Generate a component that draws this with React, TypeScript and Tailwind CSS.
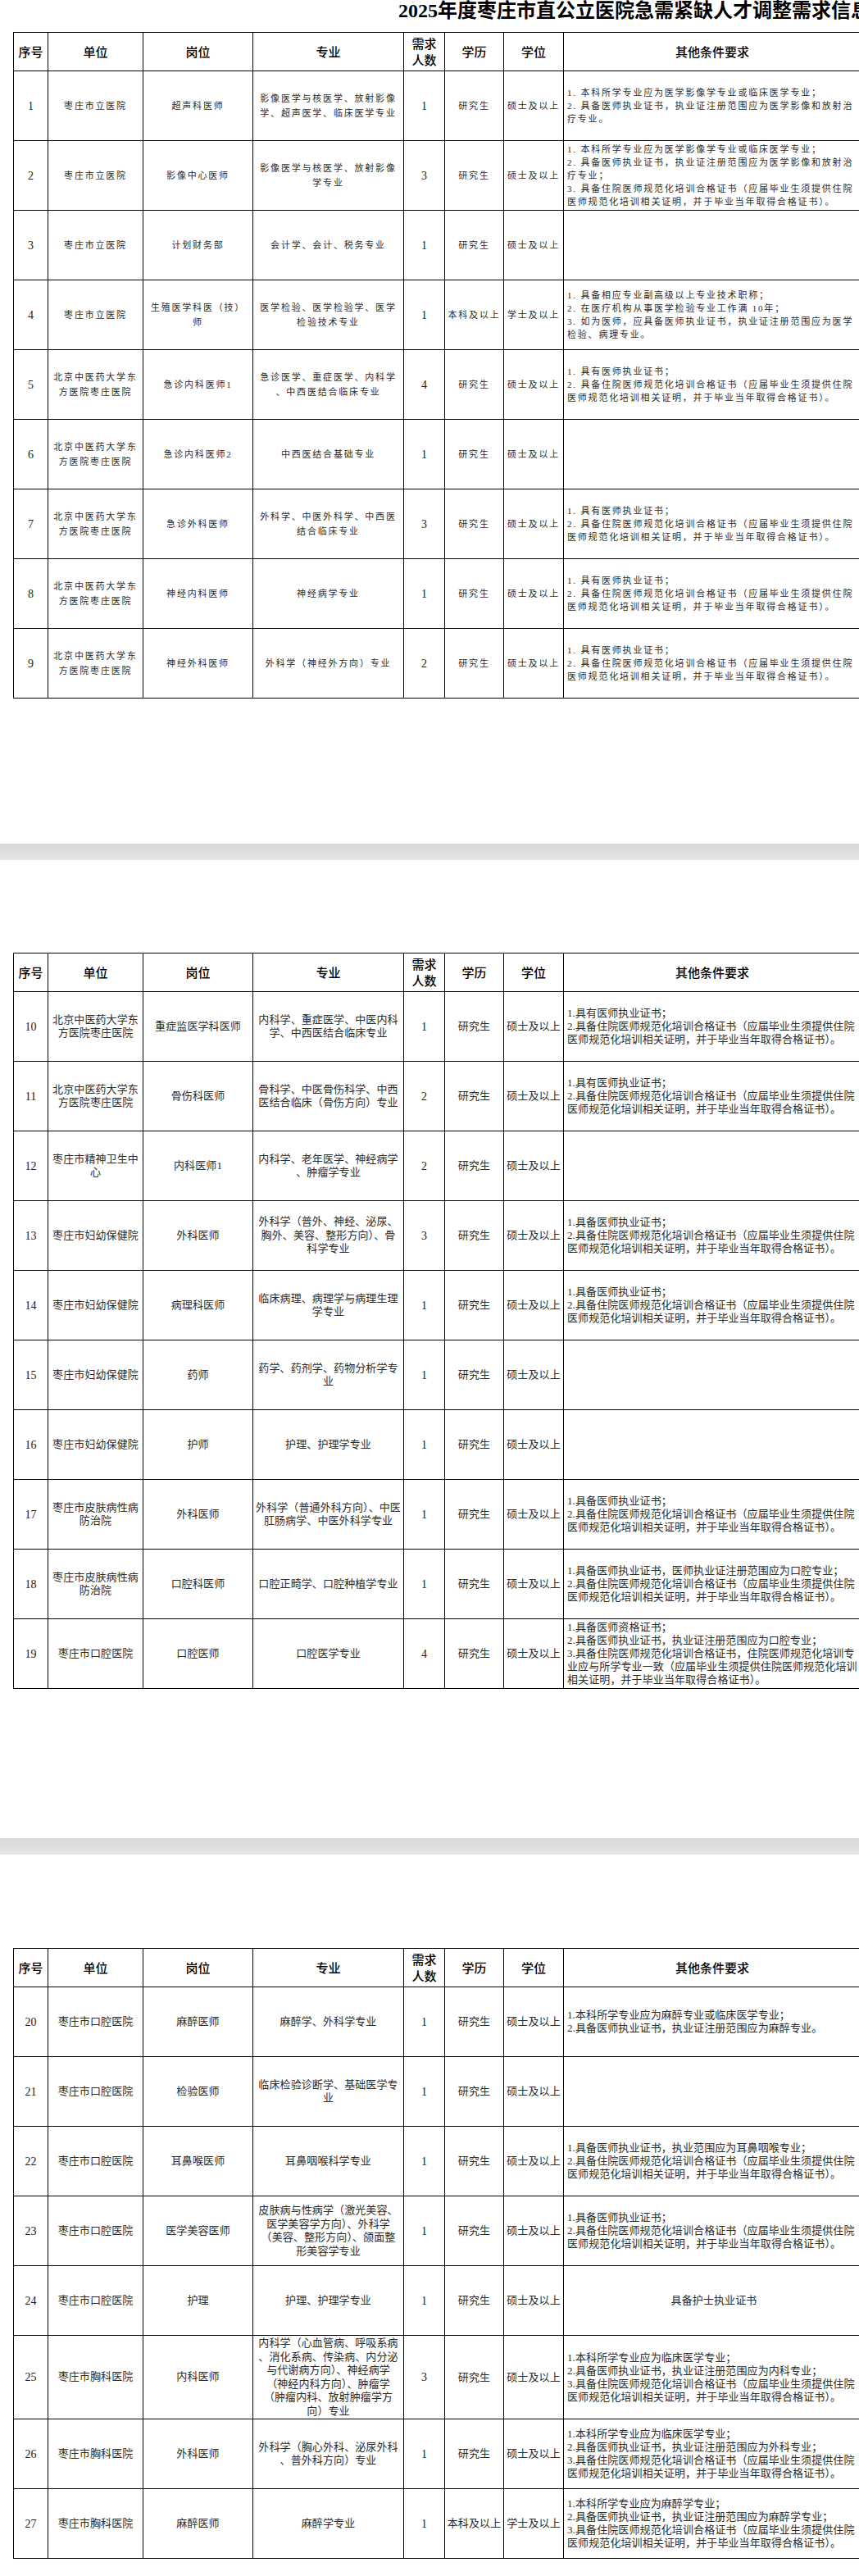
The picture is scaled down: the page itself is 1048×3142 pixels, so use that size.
import React from "react";

type Row = {
  no: string;
  unit: string[];
  post: string[];
  major: string[];
  num: string;
  edu: string;
  deg: string;
  req: string[];
  reqCenter?: boolean;
  tall?: boolean;
};

const BJ = ["北京中医药大学东", "方医院枣庄医院"];
const STD1 = [
  "2. 具备住院医师规范化培训合格证书（应届毕业生须提供住院",
  "医师规范化培训相关证明，并于毕业当年取得合格证书）。",
];
const STD2 = [
  "2.具备住院医师规范化培训合格证书（应届毕业生须提供住院",
  "医师规范化培训相关证明，并于毕业当年取得合格证书）。",
];
const STD3 = [
  "3.具备住院医师规范化培训合格证书（应届毕业生须提供住院",
  "医师规范化培训相关证明，并于毕业当年取得合格证书）。",
];

const G = "研究生";
const M = "硕士及以上";

const t1: Row[] = [
  {
    no: "1", unit: ["枣庄市立医院"], post: ["超声科医师"],
    major: ["影像医学与核医学、放射影像", "学、超声医学、临床医学专业"],
    num: "1", edu: G, deg: M,
    req: [
      "1. 本科所学专业应为医学影像学专业或临床医学专业；",
      "2. 具备医师执业证书，执业证注册范围应为医学影像和放射治",
      "疗专业。",
    ],
  },
  {
    no: "2", unit: ["枣庄市立医院"], post: ["影像中心医师"],
    major: ["影像医学与核医学、放射影像", "学专业"],
    num: "3", edu: G, deg: M,
    req: [
      "1. 本科所学专业应为医学影像学专业或临床医学专业；",
      "2. 具备医师执业证书，执业证注册范围应为医学影像和放射治",
      "疗专业；",
      "3. 具备住院医师规范化培训合格证书（应届毕业生须提供住院",
      "医师规范化培训相关证明，并于毕业当年取得合格证书）。",
    ],
  },
  {
    no: "3", unit: ["枣庄市立医院"], post: ["计划财务部"],
    major: ["会计学、会计、税务专业"], num: "1", edu: G, deg: M, req: [],
  },
  {
    no: "4", unit: ["枣庄市立医院"], post: ["生殖医学科医（技）", "师"],
    major: ["医学检验、医学检验学、医学", "检验技术专业"],
    num: "1", edu: "本科及以上", deg: "学士及以上",
    req: [
      "1. 具备相应专业副高级以上专业技术职称；",
      "2. 在医疗机构从事医学检验专业工作满 10年；",
      "3. 如为医师，应具备医师执业证书，执业证注册范围应为医学",
      "检验、病理专业。",
    ],
  },
  {
    no: "5", unit: BJ, post: ["急诊内科医师1"],
    major: ["急诊医学、重症医学、内科学", "、中西医结合临床专业"],
    num: "4", edu: G, deg: M, req: ["1. 具有医师执业证书；", ...STD1],
  },
  {
    no: "6", unit: BJ, post: ["急诊内科医师2"],
    major: ["中西医结合基础专业"], num: "1", edu: G, deg: M, req: [],
  },
  {
    no: "7", unit: BJ, post: ["急诊外科医师"],
    major: ["外科学、中医外科学、中西医", "结合临床专业"],
    num: "3", edu: G, deg: M, req: ["1. 具有医师执业证书；", ...STD1],
  },
  {
    no: "8", unit: BJ, post: ["神经内科医师"], major: ["神经病学专业"],
    num: "1", edu: G, deg: M, req: ["1. 具有医师执业证书；", ...STD1],
  },
  {
    no: "9", unit: BJ, post: ["神经外科医师"], major: ["外科学（神经外方向）专业"],
    num: "2", edu: G, deg: M, req: ["1. 具有医师执业证书；", ...STD1],
  },
];

const FY = ["枣庄市妇幼保健院"];
const PF = ["枣庄市皮肤病性病", "防治院"];
const KQ = ["枣庄市口腔医院"];
const XK = ["枣庄市胸科医院"];

const t2: Row[] = [
  {
    no: "10", unit: BJ, post: ["重症监医学科医师"],
    major: ["内科学、重症医学、中医内科", "学、中西医结合临床专业"],
    num: "1", edu: G, deg: M, req: ["1.具有医师执业证书；", ...STD2],
  },
  {
    no: "11", unit: BJ, post: ["骨伤科医师"],
    major: ["骨科学、中医骨伤科学、中西", "医结合临床（骨伤方向）专业"],
    num: "2", edu: G, deg: M, req: ["1.具有医师执业证书；", ...STD2],
  },
  {
    no: "12", unit: ["枣庄市精神卫生中", "心"], post: ["内科医师1"],
    major: ["内科学、老年医学、神经病学", "、肿瘤学专业"],
    num: "2", edu: G, deg: M, req: [],
  },
  {
    no: "13", unit: FY, post: ["外科医师"],
    major: ["外科学（普外、神经、泌尿、", "胸外、美容、整形方向）、骨", "科学专业"],
    num: "3", edu: G, deg: M, req: ["1.具备医师执业证书；", ...STD2],
  },
  {
    no: "14", unit: FY, post: ["病理科医师"],
    major: ["临床病理、病理学与病理生理", "学专业"],
    num: "1", edu: G, deg: M, req: ["1.具备医师执业证书；", ...STD2],
  },
  {
    no: "15", unit: FY, post: ["药师"], major: ["药学、药剂学、药物分析学专", "业"],
    num: "1", edu: G, deg: M, req: [],
  },
  {
    no: "16", unit: FY, post: ["护师"], major: ["护理、护理学专业"],
    num: "1", edu: G, deg: M, req: [],
  },
  {
    no: "17", unit: PF, post: ["外科医师"],
    major: ["外科学（普通外科方向）、中医", "肛肠病学、中医外科学专业"],
    num: "1", edu: G, deg: M, req: ["1.具备医师执业证书；", ...STD2],
  },
  {
    no: "18", unit: PF, post: ["口腔科医师"], major: ["口腔正畸学、口腔种植学专业"],
    num: "1", edu: G, deg: M,
    req: ["1.具备医师执业证书，医师执业证注册范围应为口腔专业；", ...STD2],
  },
  {
    no: "19", unit: KQ, post: ["口腔医师"], major: ["口腔医学专业"],
    num: "4", edu: G, deg: M,
    req: [
      "1.具备医师资格证书；",
      "2.具备医师执业证书，执业证注册范围应为口腔专业；",
      "3.具备住院医师规范化培训合格证书，住院医师规范化培训专",
      "业应与所学专业一致（应届毕业生须提供住院医师规范化培训",
      "相关证明，并于毕业当年取得合格证书）。",
    ],
  },
];

const t3: Row[] = [
  {
    no: "20", unit: KQ, post: ["麻醉医师"], major: ["麻醉学、外科学专业"],
    num: "1", edu: G, deg: M,
    req: [
      "1.本科所学专业应为麻醉专业或临床医学专业；",
      "2.具备医师执业证书，执业证注册范围应为麻醉专业。",
    ],
  },
  {
    no: "21", unit: KQ, post: ["检验医师"], major: ["临床检验诊断学、基础医学专", "业"],
    num: "1", edu: G, deg: M, req: [],
  },
  {
    no: "22", unit: KQ, post: ["耳鼻喉医师"], major: ["耳鼻咽喉科学专业"],
    num: "1", edu: G, deg: M,
    req: ["1.具备医师执业证书，执业范围应为耳鼻咽喉专业；", ...STD2],
  },
  {
    no: "23", unit: KQ, post: ["医学美容医师"],
    major: ["皮肤病与性病学（激光美容、", "医学美容学方向）、外科学", "（美容、整形方向）、颌面整", "形美容学专业"],
    num: "1", edu: G, deg: M, req: ["1.具备医师执业证书；", ...STD2],
  },
  {
    no: "24", unit: KQ, post: ["护理"], major: ["护理、护理学专业"],
    num: "1", edu: G, deg: M, req: ["具备护士执业证书"], reqCenter: true,
  },
  {
    no: "25", unit: XK, post: ["内科医师"],
    major: [
      "内科学（心血管病、呼吸系病",
      "、消化系病、传染病、内分泌",
      "与代谢病方向）、神经病学",
      "（神经内科方向）、肿瘤学",
      "（肿瘤内科、放射肿瘤学方",
      "向）专业",
    ],
    num: "3", edu: G, deg: M, tall: true,
    req: [
      "1.本科所学专业应为临床医学专业；",
      "2.具备医师执业证书，执业证注册范围应为内科专业；",
      ...STD3,
    ],
  },
  {
    no: "26", unit: XK, post: ["外科医师"],
    major: ["外科学（胸心外科、泌尿外科", "、普外科方向）专业"],
    num: "1", edu: G, deg: M,
    req: [
      "1.本科所学专业应为临床医学专业；",
      "2.具备医师执业证书，执业证注册范围应为外科专业；",
      ...STD3,
    ],
  },
  {
    no: "27", unit: XK, post: ["麻醉医师"], major: ["麻醉学专业"],
    num: "1", edu: "本科及以上", deg: "学士及以上",
    req: [
      "1.本科所学专业应为麻醉学专业；",
      "2.具备医师执业证书，执业证注册范围应为麻醉学专业；",
      ...STD3,
    ],
  },
];

function Lines({ lines }: { lines: string[] }) {
  return (
    <>
      {lines.map((l, i) => (
        <div key={i} className="whitespace-nowrap">
          {l}
        </div>
      ))}
    </>
  );
}

function DataTable({ rows, v }: { rows: Row[]; v: 1 | 2 }) {
  const body = v === 1 ? "text-[11px] tracking-[1.8px]" : "text-[13px] tracking-[0.1px]";
  const lhMulti = v === 1 ? "leading-[18px]" : "leading-[16.5px]";
  const th =
    "border border-black p-0 text-center align-middle text-[15px] font-medium leading-[20px] text-black font-['Noto_Sans_CJK_SC',sans-serif]";
  const td = "border border-black p-0 text-center align-middle";
  return (
    <table className="ml-[16px] w-[1034px] table-fixed border-collapse font-['Liberation_Serif','Noto_Sans_CJK_SC',serif] text-[#2b2b2b]">
      <colgroup>
        <col className="w-[42px]" />
        <col className="w-[116px]" />
        <col className="w-[134px]" />
        <col className="w-[184px]" />
        <col className="w-[50px]" />
        <col className="w-[72px]" />
        <col className="w-[73px]" />
        <col className="w-[363px]" />
      </colgroup>
      <thead>
        <tr className="h-[47px]">
          <th className={th}>序号</th>
          <th className={th}>单位</th>
          <th className={th}>岗位</th>
          <th className={th}>专业</th>
          <th className={th}>
            <div>需求</div>
            <div>人数</div>
          </th>
          <th className={th}>学历</th>
          <th className={th}>学位</th>
          <th className={th}>其他条件要求</th>
        </tr>
      </thead>
      <tbody>
        {rows.map((r) => (
          <tr key={r.no} className={r.tall ? "h-[102px]" : "h-[85px]"}>
            <td className={td + " text-[14px] text-[#1a1a1a]"}>{r.no}</td>
            <td className={td + " " + body + " " + lhMulti}>
              <Lines lines={r.unit} />
            </td>
            <td className={td + " " + body + " " + lhMulti}>
              <Lines lines={r.post} />
            </td>
            <td className={td + " " + body + " " + lhMulti}>
              <Lines lines={r.major} />
            </td>
            <td className={td + " text-[14px] text-[#1a1a1a]"}>{r.num}</td>
            <td className={td + " " + body}>{r.edu}</td>
            <td className={td + " " + body}>{r.deg}</td>
            <td
              className={
                "border border-black py-0 pr-0 pl-[4px] align-middle leading-[16px] " +
                body +
                (r.reqCenter ? " text-center" : " text-left")
              }
            >
              <Lines lines={r.req} />
            </td>
          </tr>
        ))}
      </tbody>
    </table>
  );
}

export default function App() {
  return (
    <div className="h-[3142px] w-[1048px] overflow-hidden bg-white">
      <div className="h-[39px] whitespace-nowrap pl-[486px] text-[24px] font-bold leading-[26px] text-black font-['Liberation_Serif','Noto_Sans_CJK_SC',serif]">
        2025年度枣庄市直公立医院急需紧缺人才调整需求信息表
      </div>
      <DataTable rows={t1} v={1} />
      <div className="mt-[177px] h-[20px] bg-linear-to-b from-[#d8d8d8] to-[#e6e6e6]" />
      <div className="mt-[113px]">
        <DataTable rows={t2} v={2} />
      </div>
      <div className="mt-[182px] h-[20px] bg-linear-to-b from-[#d8d8d8] to-[#e6e6e6]" />
      <div className="mt-[114px]">
        <DataTable rows={t3} v={2} />
      </div>
    </div>
  );
}
